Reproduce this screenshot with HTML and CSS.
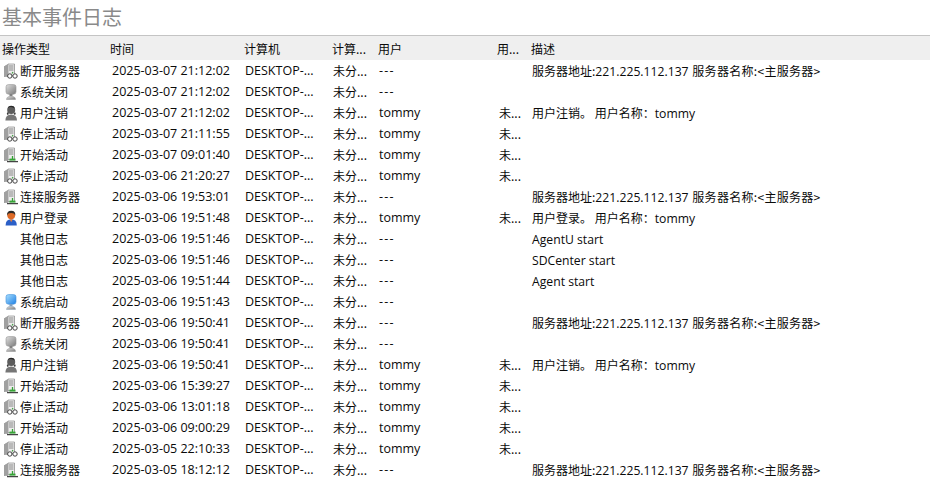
FILE: index.html
```html
<!DOCTYPE html>
<html lang="zh-CN">
<head>
<meta charset="utf-8">
<title>基本事件日志</title>
<link rel="stylesheet" href="styles.css">
</head>
<body>
<svg class="defs" width="0" height="0" aria-hidden="true">
  <defs>
    <linearGradient id="g-tower" x1="0" y1="0" x2="1" y2="0"><stop offset="0" stop-color="#9a9a9a"/><stop offset=".45" stop-color="#e8e8e8"/><stop offset="1" stop-color="#b0b0b0"/></linearGradient>
    <linearGradient id="g-grey" x1="0" y1="0" x2="1" y2="1"><stop offset="0" stop-color="#e0e0e0"/><stop offset="1" stop-color="#7a7a7a"/></linearGradient>
    <linearGradient id="g-blue" x1="0" y1="0" x2="1" y2="1"><stop offset="0" stop-color="#a9e0ff"/><stop offset="1" stop-color="#1d7fe4"/></linearGradient>
    <symbol id="tower" viewBox="0 0 16 16">
      <path d="M1 3.500 5 1h6.500v11.500L5 14H1z" fill="url(#g-tower)"/>
      <path d="M5 1h6.500v11.500H5z" fill="#ececec" stroke="#8c8c8c" stroke-width=".7"/>
      <path d="M6 3h4.500M6 5h4.500M6 7h4.500" stroke="#7d7d7d" stroke-width=".9"/>
      <path d="M1 3.500 5 1v13l-4-1z" fill="#a0a0a0"/>
    </symbol>
    <symbol id="srv-off" viewBox="0 0 16 16">
      <use href="#tower" width="16" height="16"/>
      <circle cx="6.800" cy="13" r="2.200" fill="#fff" stroke="#444" stroke-width="1"/>
      <circle cx="12" cy="13" r="2.200" fill="#fff" stroke="#444" stroke-width="1"/>
      <path d="M9 10.500 10 9" stroke="#3b9a3b" stroke-width="1.200"/>
    </symbol>
    <symbol id="srv-on" viewBox="0 0 16 16">
      <use href="#tower" width="16" height="16"/>
      <path d="M4 14.600h11" stroke="#444" stroke-width="1.300"/>
      <path d="M6.500 12.600h6" stroke="#36a336" stroke-width="2"/>
      <path d="M9.500 9v3" stroke="#36a336" stroke-width="1.300"/>
    </symbol>
    <symbol id="shut" viewBox="0 0 16 16">
      <path d="M3 2.800Q3 .6 5.500 .6h5q2.500 0 2.500 2.200v5q0 2.400-2.500 2.400h-5Q3 10.200 3 7.800z" fill="url(#g-grey)" stroke="#969696" stroke-width=".6"/>
      <path d="M6.500 10h3v2.400h-3z" fill="#808080"/>
      <path d="M3.500 15.500q0-3.200 4.500-3.200t4.500 3.200z" fill="url(#g-grey)" stroke="#969696" stroke-width=".5"/>
    </symbol>
    <symbol id="user-off" viewBox="0 0 16 16">
      <circle cx="8.200" cy="5" r="4" fill="#5c5c5c"/>
      <path d="M4.700 3.300Q8 .6 11.800 3.500L11 1.600Q8 0 5.400 1.700z" fill="#2a2a2a"/>
      <path d="M2.400 15.500q0-6 5.800-6t5.800 6z" fill="#767676"/>
      <path d="M4.500 7q-1.500 2 0 3l1.500-1zM12 7q1.500 2 0 3l-1.500-1z" fill="#3a3a3a"/>
    </symbol>
    <symbol id="user-on" viewBox="0 0 16 16">
      <circle cx="8.200" cy="5.200" r="3.900" fill="#dd6a27"/>
      <path d="M4.100 5.500Q3.600.8 8.200.8t4.100 4.700L11 3.400Q8 2.500 5.400 3.400z" fill="#2a2a2a"/>
      <path d="M2.600 15.500q0-6.200 5.600-6.200t5.600 6.200z" fill="#2b5fc7"/>
      <path d="M6.700 9.300h3l-1.500 3z" fill="#e9813a"/>
    </symbol>
    <symbol id="boot" viewBox="0 0 16 16">
      <path d="M3 2.800Q3 .6 5.500 .6h5q2.500 0 2.500 2.200v5q0 2.400-2.500 2.400h-5Q3 10.200 3 7.800z" fill="url(#g-blue)" stroke="#3f8fda" stroke-width=".6"/>
      <path d="M6.500 10h3v2.400h-3z" fill="#7d9fc0"/>
      <path d="M3.500 15.500q0-3.200 4.500-3.200t4.500 3.200z" fill="url(#g-grey)" stroke="#8fa7bd" stroke-width=".5"/>
    </symbol>
  </defs>
</svg>
<main class="page">
  <h1 class="title">基本事件日志</h1>
  <table class="log">
    <colgroup><col class="c-type"><col class="c-time"><col class="c-pc"><col class="c-grp"><col class="c-user"><col class="c-ugrp"><col class="c-desc"></colgroup>
    <thead>
      <tr><th>操作类型</th><th>时间</th><th>计算机</th><th>计算...</th><th>用户</th><th>用...</th><th>描述</th></tr>
    </thead>
    <tbody>
      <tr><td><span class="op"><svg class="ic"><use href="#srv-off"/></svg>断开服务器</span></td><td>2025-03-07 21:12:02</td><td>DESKTOP-...</td><td>未分...</td><td class="dash">---</td><td></td><td>服务器地址:<span class="l">221.225.112.137</span> <span class="tail">服务器名称:&lt;主服务器&gt;</span></td></tr>
      <tr><td><span class="op"><svg class="ic"><use href="#shut"/></svg>系统关闭</span></td><td>2025-03-07 21:12:02</td><td>DESKTOP-...</td><td>未分...</td><td class="dash">---</td><td></td><td></td></tr>
      <tr><td><span class="op"><svg class="ic"><use href="#user-off"/></svg>用户注销</span></td><td>2025-03-07 21:12:02</td><td>DESKTOP-...</td><td>未分...</td><td>tommy</td><td>未...</td><td>用户注销。 用户名称：<span class="l">tommy</span></td></tr>
      <tr><td><span class="op"><svg class="ic"><use href="#srv-off"/></svg>停止活动</span></td><td>2025-03-07 21:11:55</td><td>DESKTOP-...</td><td>未分...</td><td>tommy</td><td>未...</td><td></td></tr>
      <tr><td><span class="op"><svg class="ic"><use href="#srv-on"/></svg>开始活动</span></td><td>2025-03-07 09:01:40</td><td>DESKTOP-...</td><td>未分...</td><td>tommy</td><td>未...</td><td></td></tr>
      <tr><td><span class="op"><svg class="ic"><use href="#srv-off"/></svg>停止活动</span></td><td>2025-03-06 21:20:27</td><td>DESKTOP-...</td><td>未分...</td><td>tommy</td><td>未...</td><td></td></tr>
      <tr><td><span class="op"><svg class="ic"><use href="#srv-on"/></svg>连接服务器</span></td><td>2025-03-06 19:53:01</td><td>DESKTOP-...</td><td>未分...</td><td class="dash">---</td><td></td><td>服务器地址:<span class="l">221.225.112.137</span> <span class="tail">服务器名称:&lt;主服务器&gt;</span></td></tr>
      <tr><td><span class="op"><svg class="ic"><use href="#user-on"/></svg>用户登录</span></td><td>2025-03-06 19:51:48</td><td>DESKTOP-...</td><td>未分...</td><td>tommy</td><td>未...</td><td>用户登录。 用户名称：<span class="l">tommy</span></td></tr>
      <tr><td><span class="op"><span class="ic"></span>其他日志</span></td><td>2025-03-06 19:51:46</td><td>DESKTOP-...</td><td>未分...</td><td class="dash">---</td><td></td><td><span class="l">AgentU start</span></td></tr>
      <tr><td><span class="op"><span class="ic"></span>其他日志</span></td><td>2025-03-06 19:51:46</td><td>DESKTOP-...</td><td>未分...</td><td class="dash">---</td><td></td><td><span class="l">SDCenter start</span></td></tr>
      <tr><td><span class="op"><span class="ic"></span>其他日志</span></td><td>2025-03-06 19:51:44</td><td>DESKTOP-...</td><td>未分...</td><td class="dash">---</td><td></td><td><span class="l">Agent start</span></td></tr>
      <tr><td><span class="op"><svg class="ic"><use href="#boot"/></svg>系统启动</span></td><td>2025-03-06 19:51:43</td><td>DESKTOP-...</td><td>未分...</td><td class="dash">---</td><td></td><td></td></tr>
      <tr><td><span class="op"><svg class="ic"><use href="#srv-off"/></svg>断开服务器</span></td><td>2025-03-06 19:50:41</td><td>DESKTOP-...</td><td>未分...</td><td class="dash">---</td><td></td><td>服务器地址:<span class="l">221.225.112.137</span> <span class="tail">服务器名称:&lt;主服务器&gt;</span></td></tr>
      <tr><td><span class="op"><svg class="ic"><use href="#shut"/></svg>系统关闭</span></td><td>2025-03-06 19:50:41</td><td>DESKTOP-...</td><td>未分...</td><td class="dash">---</td><td></td><td></td></tr>
      <tr><td><span class="op"><svg class="ic"><use href="#user-off"/></svg>用户注销</span></td><td>2025-03-06 19:50:41</td><td>DESKTOP-...</td><td>未分...</td><td>tommy</td><td>未...</td><td>用户注销。 用户名称：<span class="l">tommy</span></td></tr>
      <tr><td><span class="op"><svg class="ic"><use href="#srv-on"/></svg>开始活动</span></td><td>2025-03-06 15:39:27</td><td>DESKTOP-...</td><td>未分...</td><td>tommy</td><td>未...</td><td></td></tr>
      <tr><td><span class="op"><svg class="ic"><use href="#srv-off"/></svg>停止活动</span></td><td>2025-03-06 13:01:18</td><td>DESKTOP-...</td><td>未分...</td><td>tommy</td><td>未...</td><td></td></tr>
      <tr><td><span class="op"><svg class="ic"><use href="#srv-on"/></svg>开始活动</span></td><td>2025-03-06 09:00:29</td><td>DESKTOP-...</td><td>未分...</td><td>tommy</td><td>未...</td><td></td></tr>
      <tr><td><span class="op"><svg class="ic"><use href="#srv-off"/></svg>停止活动</span></td><td>2025-03-05 22:10:33</td><td>DESKTOP-...</td><td>未分...</td><td>tommy</td><td>未...</td><td></td></tr>
      <tr><td><span class="op"><svg class="ic"><use href="#srv-on"/></svg>连接服务器</span></td><td>2025-03-05 18:12:12</td><td>DESKTOP-...</td><td>未分...</td><td class="dash">---</td><td></td><td>服务器地址:<span class="l">221.225.112.137</span> <span class="tail">服务器名称:&lt;主服务器&gt;</span></td></tr>
    </tbody>
  </table>
</main>
</body>
</html>
```
FILE: styles.css
```css
* { box-sizing: border-box; }
html, body { margin: 0; padding: 0; background: #fff; }
body {
  width: 930px;
  height: 490px;
  overflow: hidden;
  font-family: "Open Sans", "Noto Sans CJK SC", sans-serif;
  font-size: 12px;
  color: #0a0a0a;
}
.defs { display: block; height: 0; }
.page { display: flex; flex-direction: column; }
.title {
  margin: 0;
  height: 36px;
  padding: 3px 0 0 2px;
  font: 400 20px/28px "Noto Sans CJK SC", sans-serif;
  color: #8a8a8a;
  border-bottom: 1px solid #c4c4c4;
}
.log { width: 930px; table-layout: fixed; border-collapse: collapse; }
.c-type { width: 110px; }
.c-time { width: 134px; }
.c-pc { width: 88px; }
.c-grp { width: 46px; }
.c-user { width: 119px; }
.c-ugrp { width: 34px; }
.c-desc { width: 399px; }
tbody tr { height: 21px; }
th {
  height: 24px;
  padding: 2px 0 0 0;
  background: #efefef;
  font: 400 12px/16px "Noto Sans CJK SC", sans-serif;
  text-align: left;
  white-space: nowrap;
  overflow: hidden;
}
th:first-child { padding-left: 2px; }
td {
  height: 21px;
  padding: 0 0 0 1px;
  font-size: 12.5px;
  line-height: 15px;
  vertical-align: middle;
  white-space: nowrap;
  overflow: hidden;
}
td:first-child { padding-left: 3px; }
td:nth-child(2) { padding-left: 2px; }
td:nth-child(4), td:nth-child(6), td:nth-child(1), td:nth-child(7) { font-size: 12px; font-family: "Noto Sans CJK SC", sans-serif; }
td:nth-child(6) { padding-left: 2px; }
td.dash { letter-spacing: 1.2px; }
.l { font-family: "Open Sans", sans-serif; font-size: 12.2px; line-height: 1; }
.tail { letter-spacing: .3px; margin-left: 1px; }
.op { display: flex; align-items: center; height: 21px; }
.ic { flex: none; display: block; width: 16px; height: 16px; margin-right: 1px; }
```
